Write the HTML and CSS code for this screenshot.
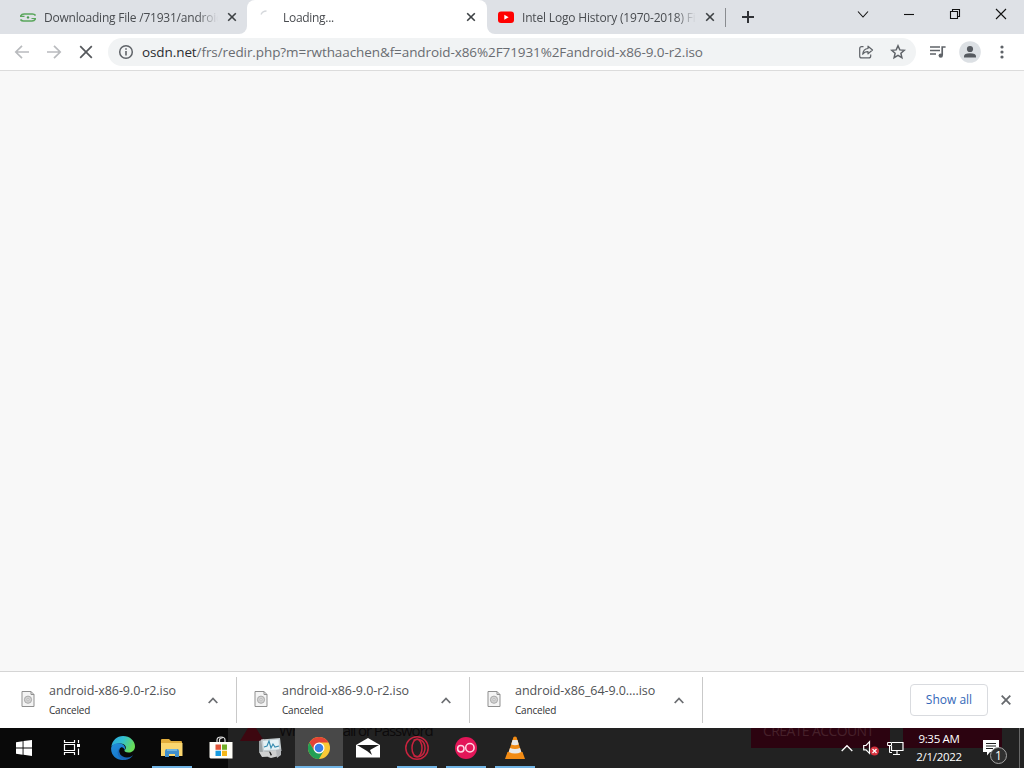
FILE: index.html
```html
<!DOCTYPE html>
<html lang="en">
<head>
    <meta charset="UTF-8">
    <meta name="viewport" content="width=device-width, initial-scale=1.0">
    <title>Loading...</title>
    <link rel="stylesheet" href="styles.css">
</head>
<body>

    <!-- Tabs -->
    <div class="tab-strip">
        <div class="tab tab-first">
            <svg class="favicon" width="16" height="16" viewBox="0 0 16 16"><g fill="none" stroke="#5aa65c" stroke-width="1.6"><path d="M.5 7.200Q1.500 5 4 5h8.500q2 0 3 1.500M15.500 9.800Q14.500 12 12 12H3.500q-2 0-3-1.500"/><path d="M0 7.300h4.500M11.500 9.500H16" stroke-width="1.200"/></g><circle cx="8" cy="8.400" r="1.200" fill="#4a9a50"/></svg>
            <span class="tab-title title-file">Downloading File /71931/android</span>
            <svg class="tab-close" width="10" height="10" viewBox="0 0 10 10"><path d="M1.2 1.2l7.6 7.6M8.8 1.2L1.2 8.8"/></svg>
        </div>
        <div class="tab-back">
            <div class="tab tab-active">
                <svg class="favicon" width="16" height="16" viewBox="0 0 16 16"><path d="M2 5.5Q3.5 2 7.5 2" fill="none" stroke="#d5d8dc" stroke-width="1.3"/></svg>
                <span class="tab-title title-loading">Loading...</span>
                <svg class="tab-close" width="10" height="10" viewBox="0 0 10 10"><path d="M1.2 1.2l7.6 7.6M8.8 1.2L1.2 8.8"/></svg>
            </div>
        </div>
        <div class="strip-rest">
            <div class="tab tab-last">
                <svg class="favicon" width="16" height="16" viewBox="0 0 16 16"><rect y="2.5" width="16" height="11.5" rx="3" fill="#f00"/><path d="M6.3 5.7v5l4.3-2.5z" fill="#fff"/></svg>
                <span class="tab-title title-intel">Intel Logo History (1970-2018) Fi</span>
                <svg class="tab-close" width="10" height="10" viewBox="0 0 10 10"><path d="M1.2 1.2l7.6 7.6M8.8 1.2L1.2 8.8"/></svg>
            </div>
            <svg class="new-tab" width="12" height="12" viewBox="0 0 12 12"><path d="M6 0v12M0 6h12" stroke="#303236" stroke-width="2"/></svg>
            <div class="window-buttons">
                <svg width="46" height="28" viewBox="0 0 46 28"><path d="M18 11.5l5 5.5 5-5.5"/></svg>
                <svg width="46" height="28" viewBox="0 0 46 28"><path d="M18 14.5h10"/></svg>
                <svg width="46" height="28" viewBox="0 0 46 28"><path d="M18.5 11.5h7v7h-7zM20.5 11V9.5h7v7H26"/></svg>
                <svg width="46" height="28" viewBox="0 0 46 28"><path d="M18 9l10 10M28 9L18 19"/></svg>
            </div>
        </div>
    </div>

    <!-- Toolbar -->
    <div class="toolbar">
        <div class="nav">
            <svg width="16" height="16" viewBox="0 0 16 16"><path d="M15 8H2M8 1.8L1.8 8 8 14.2" stroke="#b9bbbe"/></svg>
            <svg width="16" height="16" viewBox="0 0 16 16"><path d="M1 8h13M8 1.8L14.2 8 8 14.2" stroke="#b9bbbe"/></svg>
            <svg width="16" height="16" viewBox="0 0 16 16"><path d="M2.2 2.2l11.6 11.6M13.8 2.2L2.2 13.8" stroke="#55585c"/></svg>
        </div>
        <div class="address-bar">
            <svg width="16" height="16" viewBox="0 0 16 16"><circle cx="8" cy="8" r="6.3" fill="none" stroke="#5f6368" stroke-width="1.5"/><path d="M8 7v4.5M8 4.2v1.6" stroke="#5f6368" stroke-width="1.6"/></svg>
            <span class="url"><b>osdn.net</b>/frs/redir.php?m=rwthaachen&amp;f=android-x86%2F71931%2Fandroid-x86-9.0-r2.iso</span>
            <svg class="share" width="16" height="16" viewBox="0 0 16 16"><g fill="none" stroke="#5f6368" stroke-width="1.2" stroke-linejoin="round"><path d="M5.500 2.700H3.700q-2 0-2 2v7.200q0 2 2 2h7q2 0 2-2v-1.500"/><path d="M10 2.200l4.500 3.800L10 9.800V7.600Q6.500 7.500 4.700 10.300 5.200 5 10 4.500z"/></g></svg>
            <svg width="16" height="16" viewBox="0 0 16 16"><path d="M8 1.8l1.8 4.1 4.5.4-3.4 3 1 4.4L8 11.4l-3.9 2.3 1-4.4-3.4-3 4.5-.4z" fill="none" stroke="#5f6368" stroke-width="1.5"/></svg>
        </div>
        <div class="actions">
            <svg width="16" height="16" viewBox="0 0 16 16"><path d="M0 3h10M0 6.5h10M0 10h6" stroke="#5f6368" stroke-width="1.6"/><path d="M12.2 11V3h3.4" fill="none" stroke="#5f6368" stroke-width="1.7"/><circle cx="10.8" cy="11.6" r="2.2" fill="#5f6368"/></svg>
            <svg width="22" height="22" viewBox="0 0 22 22"><circle cx="11" cy="11" r="10.8" fill="#dce0e4"/><circle cx="11" cy="8" r="3.1" fill="#565a60"/><path d="M5 16.5v-1.3q0-3 6-3t6 3v1.3z" fill="#565a60"/></svg>
            <svg width="16" height="16" viewBox="0 0 16 16" fill="#5f6368"><circle cx="8" cy="3" r="1.6"/><circle cx="8" cy="8" r="1.6"/><circle cx="8" cy="13" r="1.6"/></svg>
        </div>
    </div>

    <div class="page"></div>

    <!-- Downloads -->
    <div class="downloads">
        <div class="download first">
            <svg class="file" width="14" height="18" viewBox="0 0 14 18"><path d="M1 1.5h9l3 3v12H1z" fill="#f4f4f4" stroke="#8f8f8f"/><path d="M10 1.5v3h3" fill="none" stroke="#8f8f8f"/><circle cx="7" cy="9.7" r="3.6" fill="#d2d2d2" stroke="#aaa"/><circle cx="7" cy="9.7" r="1.2" fill="#e6e6e6" stroke="#aaa" stroke-width=".6"/></svg>
            <div class="info"><p class="name">android-x86-9.0-r2.iso</p><p class="state">Canceled</p></div>
            <svg class="up" width="10" height="7" viewBox="0 0 10 7"><path d="M.7 6L5 1.5 9.3 6"/></svg>
        </div>
        <div class="download">
            <svg class="file" width="14" height="18" viewBox="0 0 14 18"><path d="M1 1.5h9l3 3v12H1z" fill="#f4f4f4" stroke="#8f8f8f"/><path d="M10 1.5v3h3" fill="none" stroke="#8f8f8f"/><circle cx="7" cy="9.7" r="3.6" fill="#d2d2d2" stroke="#aaa"/><circle cx="7" cy="9.7" r="1.2" fill="#e6e6e6" stroke="#aaa" stroke-width=".6"/></svg>
            <div class="info"><p class="name">android-x86-9.0-r2.iso</p><p class="state">Canceled</p></div>
            <svg class="up" width="10" height="7" viewBox="0 0 10 7"><path d="M.7 6L5 1.5 9.3 6"/></svg>
        </div>
        <div class="download">
            <svg class="file" width="14" height="18" viewBox="0 0 14 18"><path d="M1 1.5h9l3 3v12H1z" fill="#f4f4f4" stroke="#8f8f8f"/><path d="M10 1.5v3h3" fill="none" stroke="#8f8f8f"/><circle cx="7" cy="9.7" r="3.6" fill="#d2d2d2" stroke="#aaa"/><circle cx="7" cy="9.7" r="1.2" fill="#e6e6e6" stroke="#aaa" stroke-width=".6"/></svg>
            <div class="info"><p class="name">android-x86_64-9.0....iso</p><p class="state">Canceled</p></div>
            <svg class="up" width="10" height="7" viewBox="0 0 10 7"><path d="M.7 6L5 1.5 9.3 6"/></svg>
        </div>
        <button class="show-all">Show all</button>
        <svg class="shelf-close" width="10" height="10" viewBox="0 0 10 10"><path d="M.7.7l8.6 8.6M9.3.7L.7 9.3" stroke="#66696d" stroke-width="1.8"/></svg>
    </div>

    <!-- Taskbar -->
    <div class="taskbar">
        <div class="behind">
            <svg class="warning" width="24" height="13" viewBox="0 0 24 13"><path d="M8 0h8l8 13H0z" fill="#3d0710"/></svg>
            <span class="wrong">Wrong Email or Password</span>
            <span class="create">CREATE ACCOUNT</span>
            <span class="red-block"></span>
        </div>
        <div class="task">
            <svg width="16" height="16" viewBox="0 0 16 16" fill="#fff"><path d="M0 2.2L6.6 1.3v6.2H0zM7.5 1.1L16 0v7.5H7.5zM0 8.4h6.6v6.3L0 13.8zM7.5 8.4H16V16l-8.5-1.2z"/></svg>
        </div>
        <div class="task">
            <svg width="18" height="18" viewBox="0 0 18 18"><path d="M1.5 1v2.5h10V1M1.5 5.5h10v6h-10zM1.5 16v-2.5h10V16M15.5 1v3M15.5 9.5V16" fill="none" stroke="#fff" stroke-width="1.2"/><rect x="14" y="5" width="3" height="3" fill="#fff"/></svg>
        </div>
        <div class="task">
            <svg width="24" height="24" viewBox="0 0 24 24">
                <defs>
                    <linearGradient id="edgeTop" x1="0" y1="0" x2="1" y2=".4"><stop offset="0" stop-color="#2aa6df"/><stop offset=".5" stop-color="#32bfd0"/><stop offset="1" stop-color="#67dd58"/></linearGradient>
                    <linearGradient id="edgeLow" x1="0" y1="0" x2=".5" y2="1"><stop offset="0" stop-color="#238fdc"/><stop offset="1" stop-color="#1576c9"/></linearGradient>
                </defs>
                <path d="M.3 11C1 4.5 6 0 12 0c7 0 12 5 12 10.2 0 4-3 6.3-6.5 6.3-3 0-4.4-1.2-4-2.3 3-2.4.8-6.7-4-6.7C5 7.500 1.500 9 .3 11z" fill="url(#edgeTop)"/>
                <path d="M.2 11.500C2 7 6.500 6.800 9.500 7.500c4.500 1 5.500 4.500 4 6.500-.5-2-2-3-3.500-2.500C6.500 13 8 22 15 23.500 7 25.500-.8 20 .2 11.500z" fill="url(#edgeLow)"/>
                <path d="M9 12c-3 4 1 9.500 7 9.500 3.500 0 5.500-1.700 6.500-3C20.500 22 17.500 23.700 14 23.900 6.500 23 4.500 15 9 12z" fill="#1967b8"/>
            </svg>
        </div>
        <div class="task running">
            <svg width="22" height="20" viewBox="0 0 22 20"><path d="M0 2q0-1 1-1h7l2 2h10q1 0 1 1v14H0z" fill="#e2ad3c"/><path d="M0 5h21.500v13H0z" fill="#fbd66f"/><path d="M4 19v-6q0-2 2-2h10q2 0 2 2v6h-4v-3H8v3z" fill="#418fcc"/><path d="M6 11h10v2H6z" fill="#71b5de"/></svg>
        </div>
        <div class="task">
            <svg width="24" height="24" viewBox="0 0 24 24"><path d="M8 7V4q0-3 4-3t4 3v3M10.500 7V4q0-2 3-2" fill="none" stroke="#ddd" stroke-width="1.200"/><path d="M.500 6h23v16.500h-22l-1-1z" fill="#fffef8"/><path d="M6.500 8.500H12v5.300H6.500z" fill="#e15438"/><path d="M13 8.500h5v5.300h-5z" fill="#71ae27"/><path d="M6.500 14.700H12V20H6.500z" fill="#199de0"/><path d="M13 14.700h5V20h-5z" fill="#f4b719"/></svg>
        </div>
        <div class="task">
            <svg width="24" height="22" viewBox="0 0 24 22"><path d="M1 4l5-2v14l-5-1z" fill="#9ba1a3"/><path d="M3 2.500L22 1l1.500 13L5 15z" fill="#c5cdd0"/><path d="M5 4l15.500-1.500.8 10L6 13z" fill="#e5f2f5"/><path d="M6 10l3-1 2-5 2 7 2-4 2 3 4-1" fill="none" stroke="#338aae" stroke-width="1.100"/><path d="M1 15l10-.5 2 5-9 .5zM12 14h7l2 5-8 2-3-1 4-2z" fill="#cfd0d0"/><path d="M18 13l5-1v6l-4 3z" fill="#b4b7ba"/></svg>
        </div>
        <div class="task running current">
            <svg width="22" height="22" viewBox="0 0 22 22"><circle cx="11" cy="11" r="11" fill="#fac936"/><path d="M1.470 5.500A11 11 0 0 1 20.530 5.500H11L6.240 13.750z" fill="#e34335"/><path d="M1.470 5.500A11 11 0 0 0 11 22l4.760-8.250L11 16.500l-4.760-2.750z" fill="#239f55"/><circle cx="11" cy="11" r="5.500" fill="#fff"/><circle cx="11" cy="11" r="4.300" fill="#397ee8"/></svg>
        </div>
        <div class="task">
            <svg width="24" height="20" viewBox="0 0 24 20"><path d="M0 7l12-7 12 7v12.500H0z" fill="#fff"/><path d="M1 7h22l-9 5 2 5-5-4z" fill="#1d1d1d"/></svg>
        </div>
        <div class="task running">
            <svg width="24" height="24" viewBox="0 0 24 24" fill="none" stroke="#c7233e" stroke-width="1.500"><circle cx="12" cy="12" r="11.200"/><ellipse cx="12" cy="12" rx="5" ry="8.800"/><path d="M8.500 4.500C15 1 20 6 20 12s-5 11-11.500 7.500"/></svg>
        </div>
        <div class="task running">
            <svg width="22" height="22" viewBox="0 0 22 22"><circle cx="11" cy="11" r="11" fill="#e31658"/><g fill="none" stroke="#ffd9e5" stroke-width="1.500"><circle cx="5.800" cy="11.800" r="3.200"/><circle cx="14.900" cy="10.800" r="4.200"/></g></svg>
        </div>
        <div class="task running">
            <svg width="22" height="24" viewBox="0 0 22 24"><path d="M3.500 16h15l2.500 7H1z" fill="#f28b14"/><path d="M9.500 1q1.500-1 3 0L18 18q-7 4-14 0z" fill="#f28b14"/><path d="M8.500 4h5l1.300 4.500q-3.800 1.500-7.600 0zM6 12q5 2 10 0l1.300 4q-6.300 3-12.600 0z" fill="#e9e9e9"/></svg>
        </div>
        <div class="tray">
            <svg width="12" height="8" viewBox="0 0 12 8"><path d="M.7 7L6 1.700 11.300 7" fill="none" stroke="#fff" stroke-width="1.300"/></svg>
            <svg class="sound" width="16" height="16" viewBox="0 0 16 16"><path d="M.7 5.500H3l3.500-3.800v11.600L3 9.800H.700z" fill="none" stroke="#fff" stroke-width="1.200"/><circle cx="11.500" cy="11" r="4.500" fill="#d5303c"/><path d="M9.500 9l4 4M13.500 9l-4 4" stroke="#fff" stroke-width="1.200"/></svg>
            <svg class="network" width="17" height="15" viewBox="0 0 17 15"><path d="M5 1.500h11v8H4.500V5M10 9.500v4M6 13.500h7" fill="none" stroke="#fff" stroke-width="1.200"/><path d="M.600 1.500h3.900v3H.6zM2.500 4.500v7H5" fill="none" stroke="#fff"/></svg>
            <div class="clock"><span class="time">9:35 AM</span><span class="date">2/1/2022</span></div>
            <div class="notice">
                <svg width="16" height="16" viewBox="0 0 16 16"><path d="M0 0h16v12H7l-3 3.500V12H0z" fill="#fff"/><path d="M3 3.500h10M3 6h10M3 8.500h7" stroke="#202020" stroke-width="1.200"/></svg>
                <span class="badge">1</span>
            </div>
        </div>
    </div>

</body>
</html>
```
FILE: styles.css
```css
/* General Styles */
* {
    box-sizing: border-box;
}
body {
    margin: 0;
    width: 1024px;
    height: 768px;
    overflow: hidden;
    display: flex;
    flex-direction: column;
    font-family: "Open Sans", "Noto Sans", sans-serif;
    background: #fff;
}
svg {
    flex: none;
    display: block;
}
p {
    margin: 0;
}

/* Tabs */
.tab-strip {
    display: flex;
    height: 34px;
    background: #fff;
}
.tab {
    display: flex;
    align-items: center;
    height: 34px;
    color: #494c50;
    font-size: 12px;
}
.tab-first {
    width: 247px;
    padding-left: 20px;
    background: #dee1e6;
    border-radius: 0 0 8px 0;
}
.tab-back {
    width: 240px;
    background: linear-gradient(#dee1e6 50%, #fff 50%);
}
.tab-active {
    padding-left: 12px;
    background: #fff;
    border-radius: 8px 8px 0 0;
}
.strip-rest {
    display: flex;
    flex: 1;
    background: #dee1e6;
    border-radius: 0 0 0 8px;
}
.tab-last {
    width: 239px;
    padding-left: 11px;
    background: linear-gradient(#898c90, #898c90) right center / 1px 19px no-repeat;
}
.tab-title {
    width: 174px;
    margin: 0 9px 0 8px;
    overflow: hidden;
    white-space: nowrap;
    -webkit-mask-image: linear-gradient(to right, #000 88%, transparent);
    mask-image: linear-gradient(to right, #000 88%, transparent);
}
.title-file {
    letter-spacing: -0.22px;
}
.title-loading {
    letter-spacing: -0.3px;
}
.title-intel {
    letter-spacing: -0.18px;
}
.tab-close path {
    stroke: #3c4043;
    stroke-width: 1.6;
}
.new-tab {
    margin: 11px 0 0 16px;
}
.window-buttons {
    display: flex;
    margin-left: auto;
}
.window-buttons path {
    fill: none;
    stroke: #111;
    stroke-width: 1.1;
}

/* Toolbar */
.toolbar {
    display: flex;
    align-items: center;
    height: 37px;
    border-bottom: 1px solid #dcdcdc;
}
.nav {
    display: flex;
    gap: 16px;
    padding-left: 14px;
}
.nav path {
    fill: none;
    stroke-width: 1.7;
}
.address-bar {
    display: flex;
    align-items: center;
    width: 808px;
    height: 28px;
    margin-left: 14px;
    padding: 0 10px;
    border-radius: 14px;
    background: #f1f3f4;
}
.url {
    margin-left: 8px;
    color: #696c71;
    font-size: 13.5px;
    letter-spacing: -0.09px;
    white-space: nowrap;
}
.url b {
    color: #2b2d30;
    font-weight: normal;
}
.share {
    margin: 0 16px 0 auto;
}
.actions {
    display: flex;
    align-items: center;
    gap: 13px;
    margin-left: 14px;
}

/* Page */
.page {
    flex: 1;
    background: #f8f8f8;
}

/* Downloads */
.downloads {
    display: flex;
    align-items: center;
    height: 57px;
    border-top: 1px solid #d5d5d5;
    background: #fff;
}
.download {
    display: flex;
    align-items: center;
    width: 233px;
    height: 46px;
    padding: 0 18px 0 17px;
    border-right: 1px solid #c9c9c9;
}
.download.first {
    width: 237px;
    padding-left: 21px;
}
.file {
    margin-bottom: 2px;
}
.info {
    margin-left: 14px;
    color: #333;
    white-space: nowrap;
}
.name {
    padding-top: 1px;
    color: #505255;
    font-size: 12.5px;
    line-height: 20px;
    letter-spacing: -0.06px;
}
.state {
    font-size: 10px;
    line-height: 19px;
    letter-spacing: -0.2px;
}
.up {
    margin-left: auto;
}
.up path {
    fill: none;
    stroke: #6c6e72;
    stroke-width: 1.8;
}
.show-all {
    width: 78px;
    height: 32px;
    margin-left: auto;
    padding: 0 0 2px;
    border: 1px solid #d9dbdf;
    border-radius: 4px;
    background: #fff;
    color: #3367b8;
    font: 500 12px "Open Sans", sans-serif;
}
.shelf-close {
    margin: 0 13px;
}

/* Taskbar */
.taskbar {
    position: relative;
    display: flex;
    height: 40px;
    background: linear-gradient(to right, #090909 228px, #222 228px);
}
.behind {
    position: absolute;
    inset: 0;
    overflow: hidden;
}
.warning {
    position: absolute;
    left: 240px;
    top: 0;
}
.wrong, .create {
    position: absolute;
    white-space: nowrap;
}
.wrong {
    left: 279px;
    top: 0;
    color: #0c0a0b;
    font-size: 15px;
    line-height: 4px;
    letter-spacing: -1.1px;
}
.create {
    left: 751px;
    top: 0;
    width: 139px;
    height: 20px;
    padding-left: 12px;
    background: #2c0310;
    color: #46202a;
    font-size: 14px;
    line-height: 6px;
    letter-spacing: -0.6px;
}
.red-block {
    position: absolute;
    left: 903px;
    top: 0;
    width: 99px;
    height: 20px;
    background: #2c0310;
}
.task {
    position: relative;
    display: flex;
    align-items: center;
    justify-content: center;
    width: 48px;
    height: 40px;
    margin-right: 1px;
}
/* start button has no gap after it */
.behind + .task {
    margin-right: 0;
}
.behind + .task + .task {
    margin-right: 3px;
}
.running {
    background: linear-gradient(#71b4e5, #71b4e5) center bottom / 40px 2px no-repeat;
}
.current {
    background: linear-gradient(#71b4e5 0 0) center bottom / 48px 2px no-repeat, #484848;
}
.tray {
    position: relative;
    display: flex;
    align-items: center;
    margin-left: auto;
    color: #fff;
}
.sound {
    margin-left: 10px;
}
.network {
    margin-left: 8px;
}
.clock {
    display: flex;
    flex-direction: column;
    align-items: center;
    width: 68px;
    margin-left: 1px;
    font-size: 11.5px;
    line-height: 18px;
    letter-spacing: -0.3px;
}
.notice {
    position: relative;
    width: 37px;
    height: 40px;
    margin: 0 4px 0 10px;
    padding-top: 12px;
    border-right: 1px solid #686868;
}
.badge {
    position: absolute;
    left: 7px;
    top: 19px;
    width: 17px;
    height: 17px;
    border: 1px solid #a4a4a4;
    border-radius: 50%;
    background: #303030;
    font-size: 12px;
    line-height: 15px;
    text-align: center;
}
```
